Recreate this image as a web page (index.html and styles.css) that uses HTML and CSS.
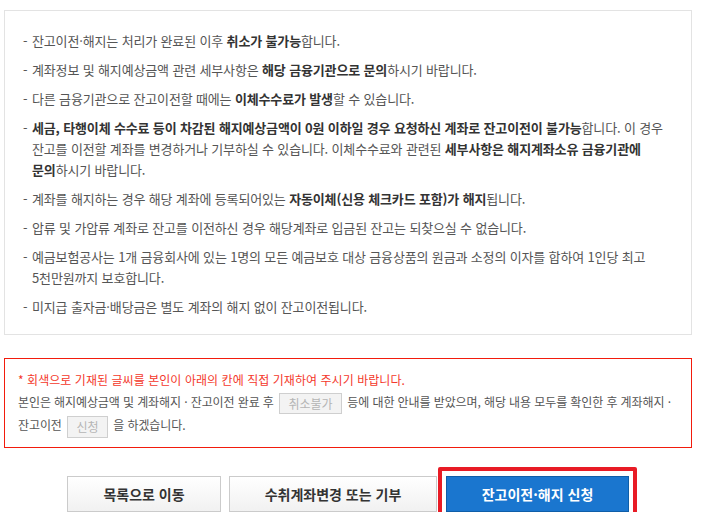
FILE: index.html
```html
<!DOCTYPE html>
<html lang="ko">
<head>
<meta charset="utf-8">
<title>잔고이전·해지 신청</title>
<link rel="stylesheet" href="styles.css">
</head>
<body>
<div class="page">
  <div class="notice">
    <ul class="notice-list">
      <li><span>잔고이전·해지는 처리가 완료된 이후 <b>취소가 불가능</b>합니다.</span></li>
      <li><span>계좌정보 및 해지예상금액 관련 세부사항은 <b>해당 금융기관으로 문의</b>하시기 바랍니다.</span></li>
      <li><span>다른 금융기관으로 잔고이전할 때에는 <b>이체수수료가 발생</b>할 수 있습니다.</span></li>
      <li><span><b>세금, 타행이체 수수료 등이 차감된 해지예상금액이 0원 이하일 경우 요청하신 계좌로 잔고이전이 불가능</b>합니다. 이 경우<br>잔고를 이전할 계좌를 변경하거나 기부하실 수 있습니다. 이체수수료와 관련된 <b>세부사항은 해지계좌소유 금융기관에<br>문의</b>하시기 바랍니다.</span></li>
      <li><span>계좌를 해지하는 경우 해당 계좌에 등록되어있는 <b>자동이체(신용 체크카드 포함)가 해지</b>됩니다.</span></li>
      <li><span>압류 및 가압류 계좌로 잔고를 이전하신 경우 해당계좌로 입금된 잔고는 되찾으실 수 없습니다.</span></li>
      <li><span>예금보험공사는 1개 금융회사에 있는 1명의 모든 예금보호 대상 금융상품의 원금과 소정의 이자를 합하여 1인당 최고<br>5천만원까지 보호합니다.</span></li>
      <li><span>미지급 출자금·배당금은 별도 계좌의 해지 없이 잔고이전됩니다.</span></li>
    </ul>
  </div>

  <div class="confirm">
    <p class="confirm-guide">* 회색으로 기재된 글씨를 본인이 아래의 칸에 직접 기재하여 주시기 바랍니다.</p>
    <p class="confirm-text">본인은 해지예상금액 및 계좌해지 · 잔고이전 완료 후 <input class="fill fill-wide" type="text" placeholder="취소불가"> 등에 대한 안내를 받았으며, 해당 내용 모두를 확인한 후 계좌해지 ·<br>잔고이전 <input class="fill fill-narrow" type="text" placeholder="신청"> 을 하겠습니다.</p>
  </div>

  <div class="actions">
    <button class="btn btn-list" type="button">목록으로 이동</button>
    <button class="btn btn-change" type="button">수취계좌변경 또는 기부</button>
    <span class="highlight"><button class="btn btn-primary" type="button">잔고이전·해지 신청</button></span>
  </div>
</div>
</body>
</html>
```
FILE: styles.css
```css
* { box-sizing: border-box; }
html, body { margin: 0; padding: 0; background: #fff; }
body {
  font-family: "Noto Sans CJK KR", "Noto Sans", sans-serif;
  font-size: 13px;
  letter-spacing: -0.15px;
  color: #555;
}
.page {
  width: 688px;
  margin: 10px 0 0 4px;
}
.notice {
  border: 1px solid #e3e3e3;
  padding: 19px 0 17px 18px;
}
.notice-list {
  list-style: none;
  margin: 0;
  padding: 0;
}
.notice-list li {
  display: flex;
  line-height: 21px;
  margin-bottom: 8px;
}
.notice-list li:last-child { margin-bottom: 0; }
.notice-list li::before {
  content: "-";
  flex: none;
  width: 9px;
}
.notice-list b { font-weight: 700; color: #333; }

.confirm {
  margin-top: 23px;
  height: 90px;
  border: 1px solid #f21b0c;
  padding: 10px 13px 0 13px;
}
.confirm p { margin: 0; }
.confirm-guide {
  color: #f4382b;
  font-size: 12px;
  letter-spacing: 0.05px;
  line-height: 22px;
}
.confirm-text {
  font-size: 12px;
  letter-spacing: -0.1px;
  line-height: 22px;
}
.fill {
  height: 21px;
  border: 1px solid #cfcfcf;
  background: #f3f3f3;
  font-family: inherit;
  font-size: 12px;
  padding: 0;
  text-align: center;
  vertical-align: middle;
  margin: 0 2px;
}
.fill::placeholder { color: #b5b5b5; }
.fill-wide { width: 63px; }
.fill-narrow { width: 41px; height: 22px; }

.actions {
  display: flex;
  justify-content: center;
  align-items: center;
  gap: 8px;
  margin-top: 28px;
}
.btn {
  height: 36px;
  font-family: inherit;
  font-size: 14px;
  font-weight: 700;
  letter-spacing: 0;
  border-radius: 0;
  cursor: pointer;
}
.btn-list, .btn-change {
  border: 1px solid #cbcbcb;
  background: linear-gradient(#ffffff, #f1f1f1);
  color: #333;
}
.btn-list { width: 154px; }
.btn-change { width: 208px; }
.highlight {
  position: relative;
  margin-left: 1px;
  display: inline-flex;
}
.highlight::after {
  content: "";
  position: absolute;
  left: -8px;
  right: -8px;
  top: -9px;
  bottom: -6px;
  border: 4px solid #e81b25;
  border-radius: 2px;
  pointer-events: none;
}
.btn-primary {
  width: 183px;
  border: 1px solid #0f5ea8;
  background: #1a76cf;
  color: #fff;
}
```
